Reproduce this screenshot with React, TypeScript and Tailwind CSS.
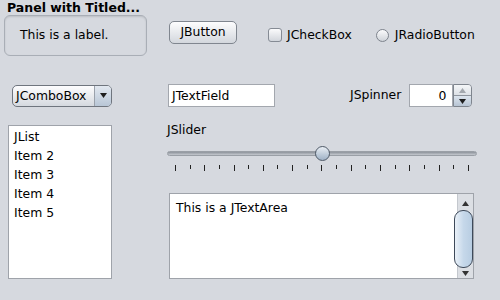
const items = ["JList", "Item 2", "Item 3", "Item 4", "Item 5"];
const ticks = Array.from({ length: 21 }, (_, i) => i);

function Arrow({ up, color }: { up?: boolean; color: string }) {
  return (
    <svg width="7" height="5" viewBox="0 0 7 5">
      <path d={up ? "M0 5 L3.5 0 L7 5 Z" : "M0 0 L7 0 L3.5 5 Z"} fill={color} />
    </svg>
  );
}

export default function App() {
  return (
    <div className="w-[500px] h-[300px] bg-[#d6d9df] text-[12.4px] text-black overflow-hidden font-['DejaVu_Sans',sans-serif]">
      {/* row 1 */}
      <div className="flex h-[56px]">
        <div className="w-[160px]">
          <div className="pl-[7px] pt-[1px] h-[15px] leading-[14px] font-bold text-[12.5px]">Panel with Titled...</div>
          <div className="ml-[4px] w-[143px] h-[41px] rounded-[6px] border border-[#a9aeb6] shadow-[inset_0_1px_2px_rgba(0,0,0,0.12)] flex items-center pl-[15px] pb-[1px]">
            This is a label.
          </div>
        </div>
        <div className="flex items-start pt-[21px]">
          <button className="ml-[9px] w-[68px] h-[23px] rounded-[5px] border border-[#80868f] bg-gradient-to-b from-[#fdfdfe] to-[#d3d7dd] flex items-center justify-center">
            JButton
          </button>
          <div className="ml-[31px] mt-[5px] flex items-center">
            <div className="w-[14px] h-[14px] rounded-[3px] border border-[#858b94] bg-gradient-to-b from-[#fbfbfc] to-[#d2d6dc]" />
            <span className="ml-[5px]">JCheckBox</span>
          </div>
          <div className="ml-[24px] mt-[5px] flex items-center">
            <div className="w-[13px] h-[13px] rounded-full border border-[#7e848d] bg-gradient-to-b from-[#fbfbfc] to-[#cfd3d9]" />
            <span className="ml-[6px]">JRadioButton</span>
          </div>
        </div>
      </div>

      {/* row 2 */}
      <div className="flex items-center h-[23px] mt-[28px]">
        <div className="ml-[12px] w-[100px] h-[22px] rounded-[5px] border border-[#6f757e] bg-gradient-to-b from-[#fdfdfe] to-[#d5d9df] flex">
          <span className="flex-1 pl-[3px] leading-[20px]">JComboBox</span>
          <div className="w-[17px] border-l border-[#9aa1ab] rounded-r-[4px] bg-gradient-to-b from-[#e2e8f0] to-[#b8c6d6] flex items-center justify-center">
            <Arrow color="#1e1e1e" />
          </div>
        </div>
        <div className="ml-[56px] w-[107px] h-[23px] bg-white border border-[#a3a7ae] pl-[3px] leading-[21px]">JTextField</div>
        <span className="ml-[75px]">JSpinner</span>
        <div className="ml-[8px] w-[63px] h-[23px] flex">
          <div className="w-[44px] bg-white border border-[#a3a7ae] text-right pr-[6px] leading-[21px]">0</div>
          <div className="w-[19px] flex flex-col rounded-r-[4px] border border-[#7f858e] overflow-hidden">
            <div className="flex-1 bg-gradient-to-b from-[#f4f6f8] to-[#dde1e6] flex items-center justify-center border-b border-[#8f959e]">
              <Arrow up color="#a3a8ae" />
            </div>
            <div className="flex-1 bg-gradient-to-b from-[#dde5ee] to-[#b7c4d3] flex items-center justify-center">
              <Arrow color="#1e1e1e" />
            </div>
          </div>
        </div>
      </div>

      {/* row 3 */}
      <div className="flex mt-[18px]">
        <div className="ml-[8px] w-[104px] h-[154px] bg-white border border-[#9fa3aa] pl-[5px] pt-[1px]">
          {items.map((it) => (
            <div key={it} className="leading-[19px]">{it}</div>
          ))}
        </div>
        <div className="ml-[55px] w-[310px]">
          <div className="leading-[14px] mt-[-2px]">JSlider</div>
          <div className="relative h-[14px] mt-[10px]">
            <div className="absolute left-0 right-[0px] top-[4px] h-[5px] rounded-full bg-gradient-to-b from-[#8d939b] to-[#c5c9cf] border border-[#9a9fa6]" />
            <div className="absolute left-[148px] top-[-1px] w-[15px] h-[15px] rounded-full border border-[#4f5a68] bg-gradient-to-b from-[#e9eef4] to-[#9fb2c6]" />
          </div>
          <div className="ml-[8px] w-[294px] flex justify-between items-start mt-[4px]">
            {ticks.map((t) => (
              <div key={t} className={t % 2 === 0 ? "w-px h-[6px] bg-[#222]" : "w-px h-[4px] bg-[#222]"} />
            ))}
          </div>
          <div className="ml-[2px] mt-[22px] w-[305px] h-[86px] bg-white border border-[#9fa3aa] flex">
            <div className="flex-1 pl-[6px] pt-[7px] leading-[14px]">This is a JTextArea</div>
            <div className="w-[16px] bg-[#dcdfe4] border-l border-[#c4c8ce] flex flex-col items-center">
              <div className="h-[16px] flex items-center justify-center pt-[2px]"><Arrow up color="#333" /></div>
              <div className="w-[19px] ml-[-5px] h-[58px] rounded-[9px] border border-[#3e4a5a] bg-gradient-to-r from-[#eaf1f8] via-[#c6d8ea] to-[#b8cde2]" />
              <div className="flex-1 flex items-center justify-center"><Arrow color="#333" /></div>
            </div>
          </div>
        </div>
      </div>
    </div>
  );
}
